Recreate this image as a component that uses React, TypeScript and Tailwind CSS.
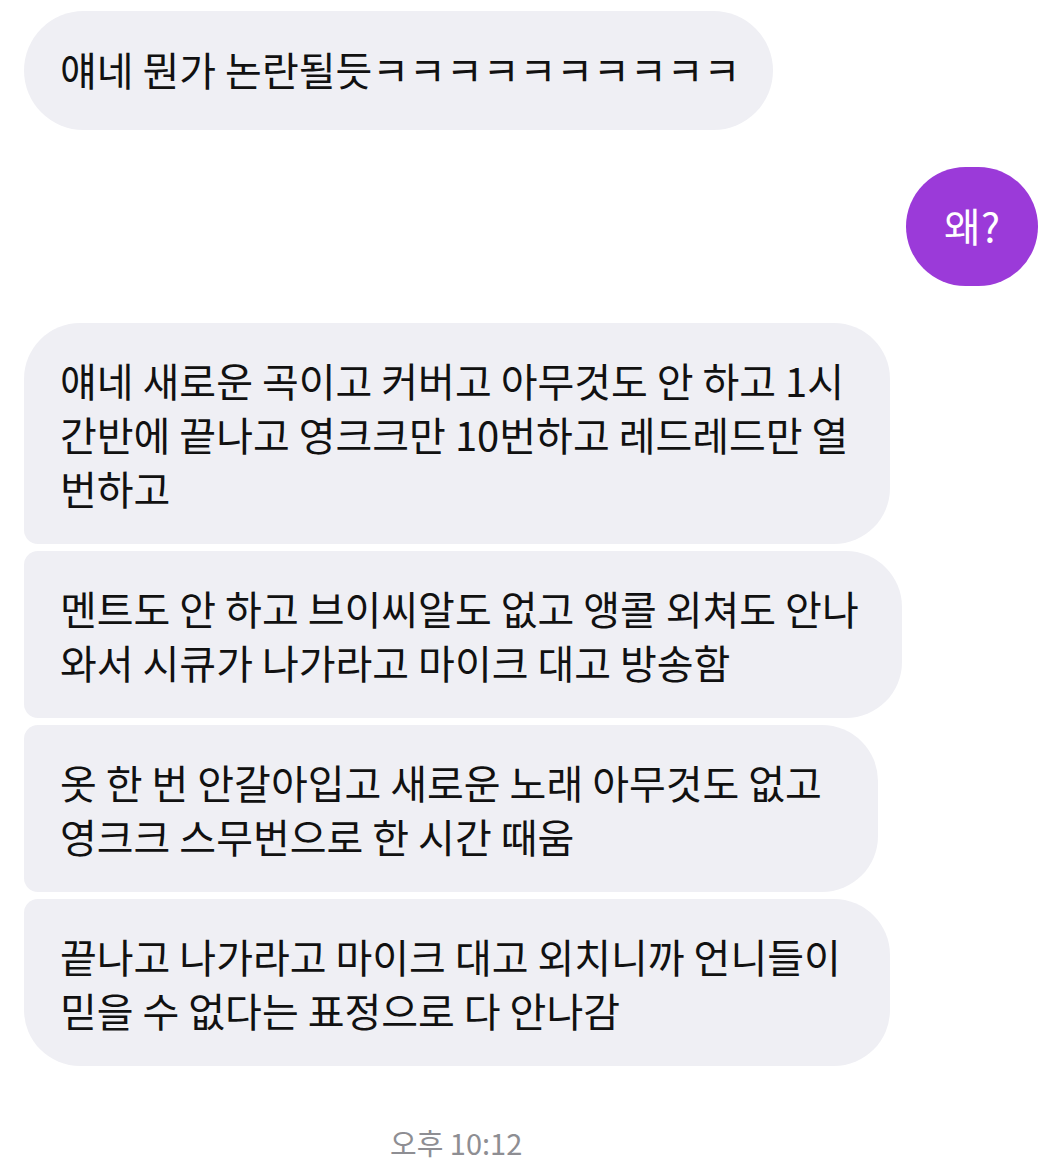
import React from 'react';

const FONT = { fontFamily: '"Noto Sans CJK KR", "Noto Sans", sans-serif' };

interface BubbleProps {
  lines: string[];
  width: string;
  radius: string;
}

function Bubble({ lines, width, radius }: BubbleProps) {
  return (
    <div
      className={`${width} ${radius} bg-[#efeff4] pl-[36px] py-[29.5px] text-[40px] leading-[54px] text-[#111111] whitespace-nowrap`}
    >
      {lines.map((l, i) => (
        <div key={i}>{l}</div>
      ))}
    </div>
  );
}

export default function App() {
  return (
    <div className="w-[1062px] h-[1170px] bg-white overflow-hidden" style={FONT}>
      <div className="pt-[11px] px-[24px] flex flex-col">
        {/* incoming */}
        <div className="w-[749px] h-[119px] rounded-full bg-[#efeff4] pl-[36px] pb-[4px] flex items-center text-[40px] text-[#111111] whitespace-nowrap">
          얘네 뭔가 논란될듯ㅋㅋㅋㅋㅋㅋㅋㅋㅋㅋ
        </div>

        {/* outgoing */}
        <div className="mt-[37px] self-end">
          <div className="w-[132px] h-[119px] rounded-full bg-[#9b3ad9] pb-[4px] flex items-center justify-center text-[40px] text-white">
            왜?
          </div>
        </div>

        {/* incoming group */}
        <div className="mt-[37px] flex flex-col gap-[7px]">
          <Bubble
            width="w-[866px]"
            radius="rounded-tl-[56px] rounded-tr-[56px] rounded-br-[56px] rounded-bl-[14px]"
            lines={[
              '얘네 새로운 곡이고 커버고 아무것도 안 하고 1시',
              '간반에 끝나고 영크크만 10번하고 레드레드만 열',
              '번하고',
            ]}
          />
          <Bubble
            width="w-[878px]"
            radius="rounded-tl-[14px] rounded-tr-[56px] rounded-br-[56px] rounded-bl-[14px]"
            lines={['멘트도 안 하고 브이씨알도 없고 앵콜 외쳐도 안나', '와서 시큐가 나가라고 마이크 대고 방송함']}
          />
          <Bubble
            width="w-[854px]"
            radius="rounded-tl-[14px] rounded-tr-[56px] rounded-br-[56px] rounded-bl-[14px]"
            lines={['옷 한 번 안갈아입고 새로운 노래 아무것도 없고', '영크크 스무번으로 한 시간 때움']}
          />
          <Bubble
            width="w-[866px]"
            radius="rounded-tl-[14px] rounded-tr-[56px] rounded-br-[56px] rounded-bl-[56px]"
            lines={['끝나고 나가라고 마이크 대고 외치니까 언니들이', '믿을 수 없다는 표정으로 다 안나감']}
          />
        </div>

        {/* timestamp */}
        <div className="mt-[56px] pl-[366px] text-[29px] leading-[40px] text-[#8e8e93]">
          오후 10:12
        </div>
      </div>
    </div>
  );
}
